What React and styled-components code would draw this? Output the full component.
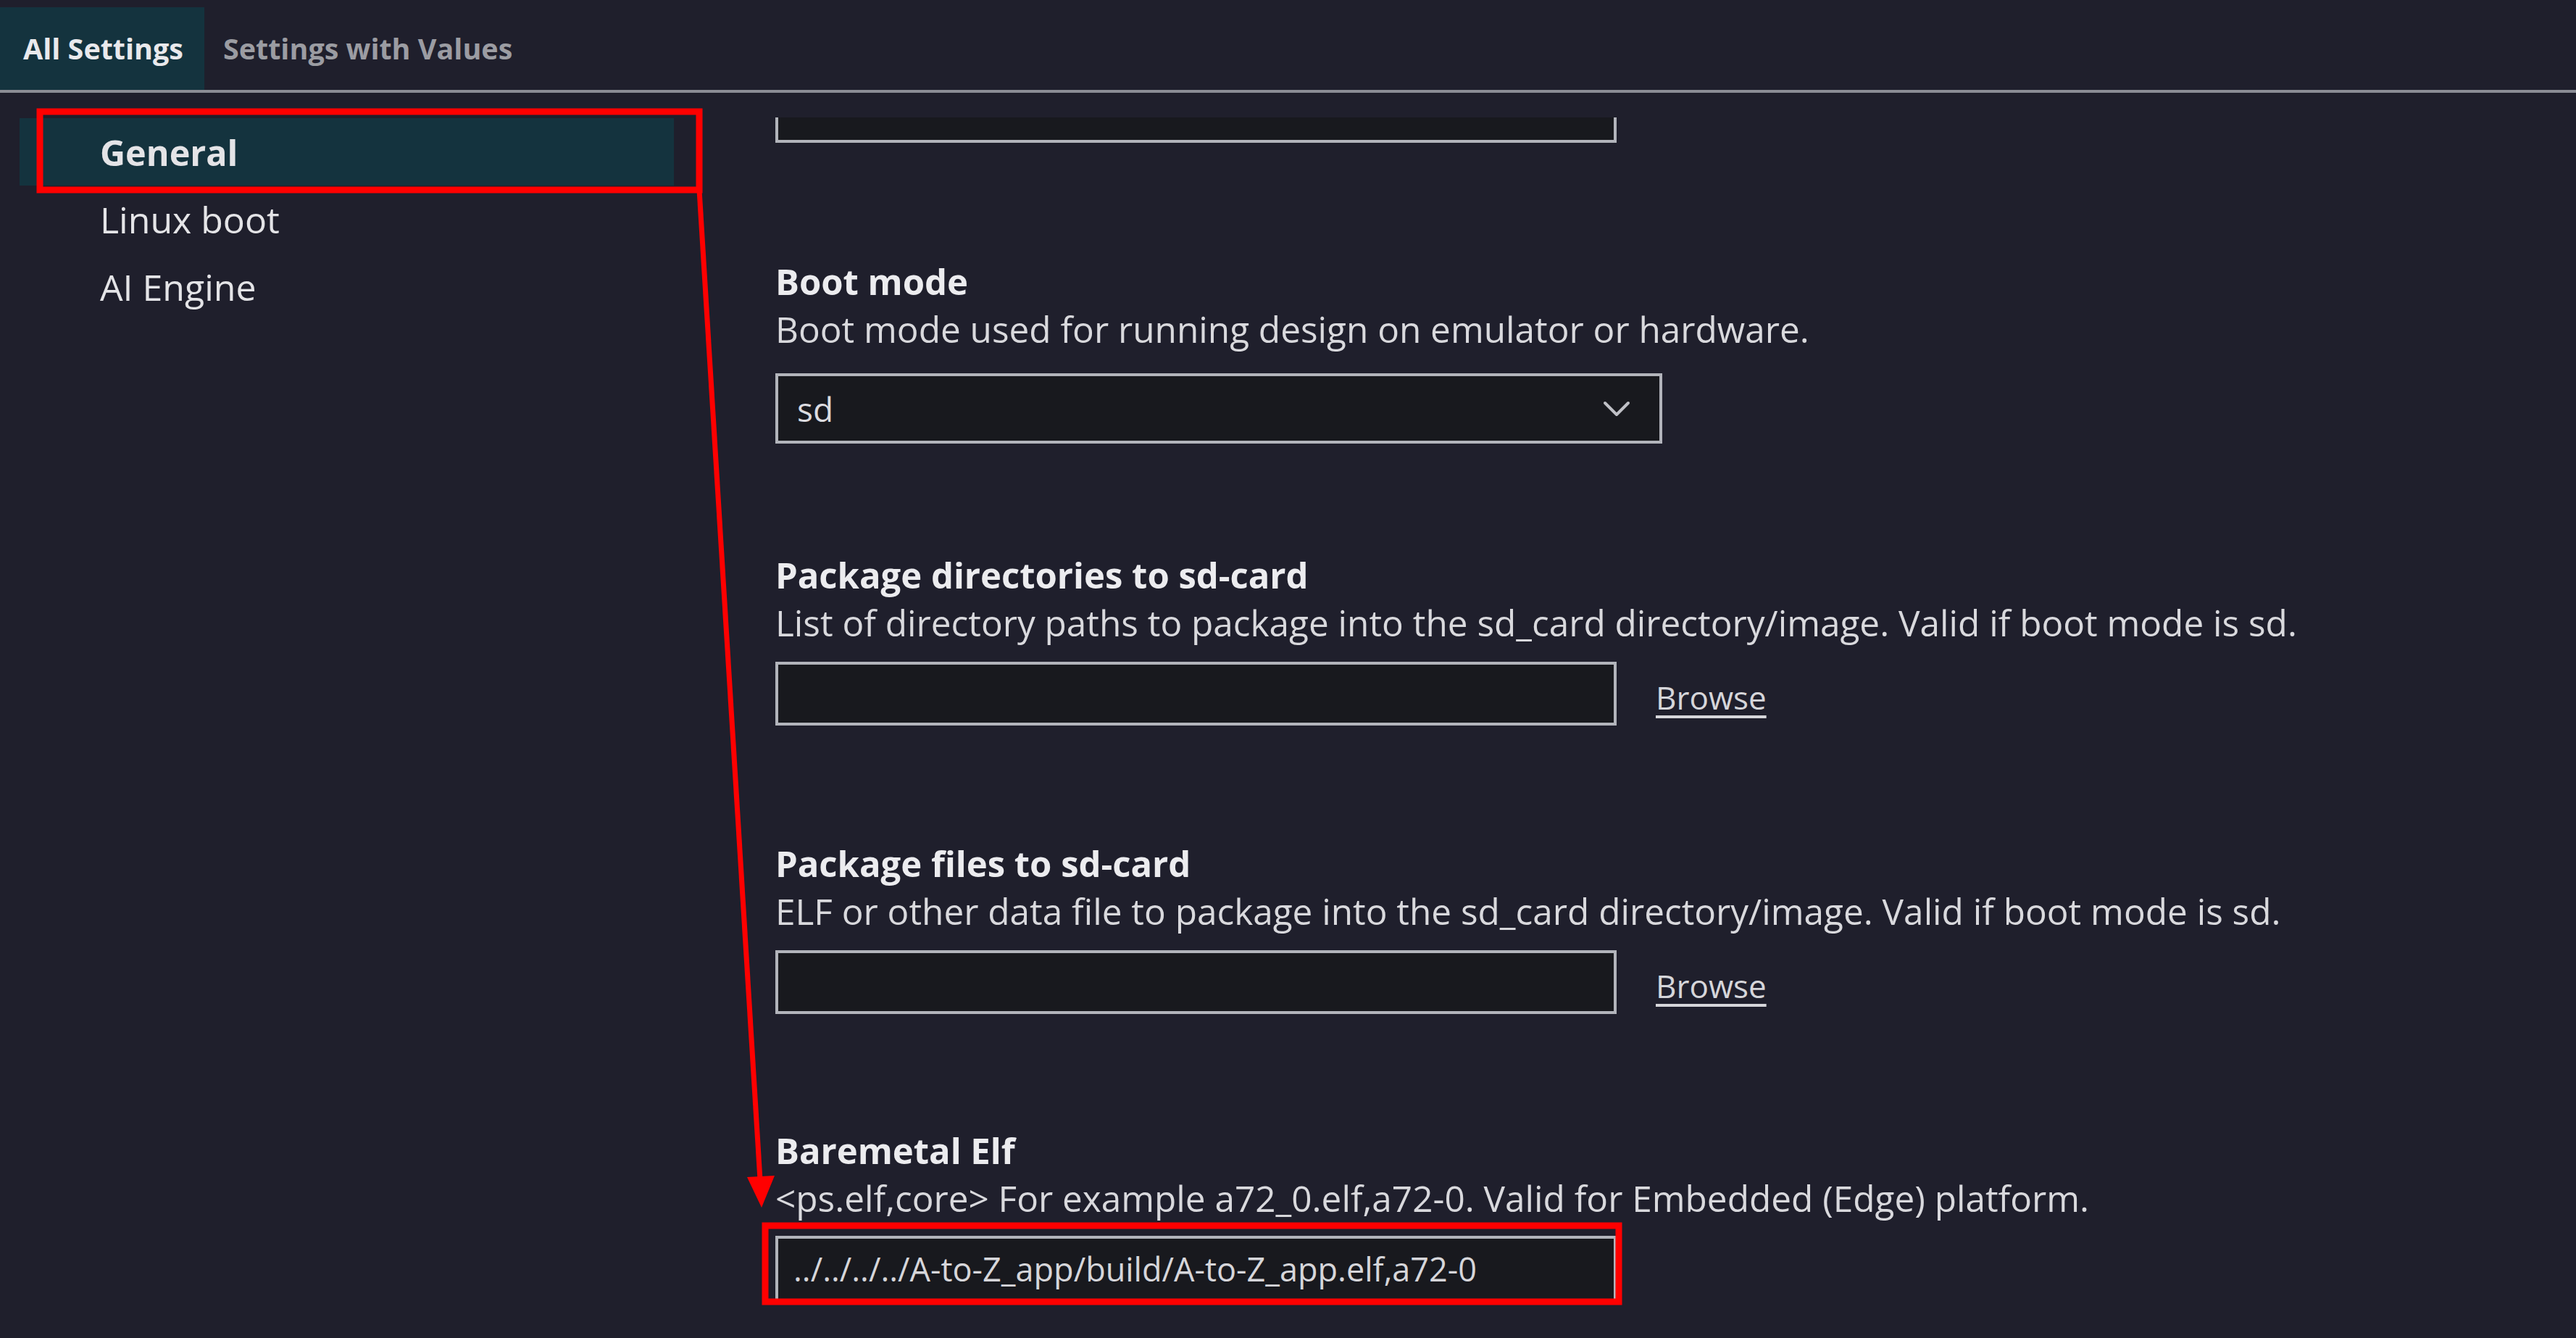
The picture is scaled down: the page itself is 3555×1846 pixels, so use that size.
import styled, { createGlobalStyle } from 'styled-components';

const GlobalStyle = createGlobalStyle`
    html, body {
        margin: 0;
        padding: 0;
        background: #1f1f2c;
    }
    body {
        font-family: 'Open Sans', 'Noto Sans', sans-serif;
        color: #e6e6e8;
    }
`;

const Page = styled.div`
    position: relative;
    width: 3555px;
    height: 1846px;
    overflow: hidden;
    background: #1f1f2c;
`;

const TabBar = styled.div`
    display: flex;
    align-items: flex-end;
    height: 124px;
    border-bottom: 4px solid #8b8d95;
`;

const Tab = styled.div`
    display: flex;
    align-items: center;
    height: 114px;
    padding: ${(p) => (p.$active ? '0 29px 0 32px' : '0 26px')};
    font-size: 39.5px;
    font-weight: 700;
    color: ${(p) => (p.$active ? '#e9e9ec' : '#9b9ca2')};
    background: ${(p) => (p.$active ? '#14333e' : 'transparent')};
`;

const Body = styled.div`
    display: flex;
    height: calc(1846px - 128px);
`;

const Sidebar = styled.nav`
    width: 1070px;
    flex-shrink: 0;
    padding: 35px 0 0 27px;
    box-sizing: border-box;
`;

const NavItem = styled.div`
    display: flex;
    align-items: center;
    width: 903px;
    height: 93px;
    padding-left: 111px;
    box-sizing: border-box;
    font-size: ${(p) => (p.$active ? 48.5 : 50)}px;
    font-weight: ${(p) => (p.$active ? 700 : 400)};
    color: #e4e4e7;
    background: ${(p) => (p.$active ? '#14333e' : 'transparent')};
`;

const Content = styled.main`
    flex: 1;
    display: flex;
    flex-direction: column;
    padding-top: 34px;
`;

const Scroller = styled.div`
    flex: 1;
    overflow: hidden;
`;

const Setting = styled.section`
    padding-bottom: ${(p) => p.$gap}px;
`;

const Title = styled.div`
    font-size: 49px;
    line-height: 66px;
    font-weight: 700;
    color: #ececef;
`;

const Desc = styled.div`
    font-size: 49.5px;
    line-height: 66px;
    color: #d9d9dd;
`;

const FieldRow = styled.div`
    display: flex;
    align-items: center;
    margin-top: ${(p) => p.$top ?? 21}px;
`;

const TextInput = styled.div`
    display: flex;
    align-items: center;
    width: 1161px;
    height: ${(p) => p.$h ?? 88}px;
    padding-left: 21px;
    box-sizing: border-box;
    border: 4px solid #b2b4bb;
    background: #18191e;
    font-size: 45px;
    color: #d6d6da;
`;

const ScrolledInput = styled(TextInput)`
    margin-top: -53px;
    margin-bottom: 158px;
`;

const Select = styled.div`
    display: flex;
    align-items: center;
    justify-content: space-between;
    width: 1224px;
    height: 97px;
    padding: 0 40px 0 26px;
    box-sizing: border-box;
    border: 4px solid #b2b4bb;
    background: #18191e;
    font-size: 46px;
    color: #dcdce0;
`;

const Browse = styled.span`
    margin: 10px 0 0 54px;
    font-size: 44px;
    color: #d6d6da;
    text-decoration: underline;
    text-underline-offset: 8px;
    text-decoration-thickness: 4px;
`;

const Overlay = styled.svg`
    position: absolute;
    inset: 0;
    pointer-events: none;
`;

const Chevron = () => (
    <svg width="38" height="24" viewBox="0 0 38 24" fill="none">
        <path d="M3 4 L19 20 L35 4" stroke="#bfc0c6" strokeWidth="4" strokeLinecap="round" strokeLinejoin="round" />
    </svg>
);

const settings = [
    { title: 'Package directories to sd-card', desc: 'List of directory paths to package into the sd_card directory/image. Valid if boot mode is sd.', browse: true, gap: 157 },
    { title: 'Package files to sd-card', desc: 'ELF or other data file to package into the sd_card directory/image. Valid if boot mode is sd.', browse: true, gap: 155 },
    { title: 'Baremetal Elf', desc: '<ps.elf,core> For example a72_0.elf,a72-0. Valid for Embedded (Edge) platform.', value: '../../../../A-to-Z_app/build/A-to-Z_app.elf,a72-0', gap: 0, top: 19, h: 91 },
];

const App = () => {
    return (
        <Page>
            <GlobalStyle />
            <TabBar>
                <Tab $active>All Settings</Tab>
                <Tab>Settings with Values</Tab>
            </TabBar>
            <Body>
                <Sidebar>
                    <NavItem $active>General</NavItem>
                    <NavItem>Linux boot</NavItem>
                    <NavItem>AI Engine</NavItem>
                </Sidebar>
                <Content>
                    <Scroller>
                        <ScrolledInput />
                        <Setting $gap={148}>
                            <Title>Boot mode</Title>
                            <Desc>Boot mode used for running design on emulator or hardware.</Desc>
                            <FieldRow $top={28}>
                                <Select>
                                    <span>sd</span>
                                    <Chevron />
                                </Select>
                            </FieldRow>
                        </Setting>
                        {settings.map((s) => (
                            <Setting key={s.title} $gap={s.gap}>
                                <Title>{s.title}</Title>
                                <Desc>{s.desc}</Desc>
                                <FieldRow $top={s.top}>
                                    <TextInput $h={s.h}>{s.value}</TextInput>
                                    {s.browse && <Browse>Browse</Browse>}
                                </FieldRow>
                            </Setting>
                        ))}
                    </Scroller>
                </Content>
            </Body>
            <Overlay width="3555" height="1846" viewBox="0 0 3555 1846">
                <rect x="55" y="154" width="910" height="108" fill="none" stroke="#ff0000" strokeWidth="9" />
                <line x1="965" y1="262" x2="1049" y2="1628" stroke="#ff0000" strokeWidth="7" />
                <polygon points="1031,1624 1069,1622 1051,1666" fill="#ff0000" />
                <rect x="1056" y="1691" width="1178" height="105" fill="none" stroke="#ff0000" strokeWidth="9" />
            </Overlay>
        </Page>
    );
};

export default App;
